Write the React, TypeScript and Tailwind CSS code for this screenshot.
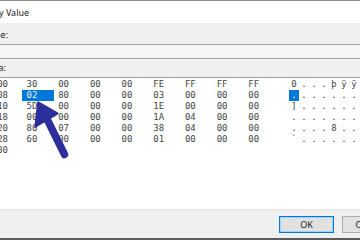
import { Fragment } from "react";

type Row = { addr: string; bytes: string[]; ascii: string };

const rows: Row[] = [
  { addr: "0000", bytes: ["30", "00", "00", "00", "FE", "FF", "FF", "FF"], ascii: "0...þÿÿÿ" },
  { addr: "0008", bytes: ["02", "80", "00", "00", "03", "00", "00", "00"], ascii: "........" },
  { addr: "0010", bytes: ["5D", "00", "00", "00", "1E", "00", "00", "00"], ascii: "]......." },
  { addr: "0018", bytes: ["00", "00", "00", "00", "1A", "04", "00", "00"], ascii: "........" },
  { addr: "0020", bytes: ["80", "07", "00", "00", "38", "04", "00", "00"], ascii: "....8..." },
  { addr: "0028", bytes: ["60", "00", "00", "00", "01", "00", "00", "00"], ascii: "`......." },
  { addr: "0030", bytes: [], ascii: "" },
];

// the caret sits on the first byte of the second line
const SEL_ROW = 1;
const SEL_COL = 0;

function HexRow({ row, index }: { row: Row; index: number }) {
  return (
    <div className="flex h-[11px] items-center leading-[11px]">
      <span className="w-[42px] shrink-0 pr-[14px] text-right">{row.addr}</span>
      {row.bytes.map((b, i) => {
        const sel = index === SEL_ROW && i === SEL_COL;
        return (
          <span
            key={i}
            className={
              sel
                ? "h-[11px] w-[31.7px] shrink-0 bg-[#0078d7] pl-[4.5px] text-[#eaf2ff]"
                : "w-[31.7px] shrink-0 pl-[4.5px]"
            }
          >
            {b}
          </span>
        );
      })}
      {row.bytes.length > 0 && (
        <span className="ml-[13.4px] flex shrink-0">
          {row.ascii.split("").map((c, i) => {
            const sel = index === SEL_ROW && i === SEL_COL;
            return (
              <span
                key={i}
                className={
                  sel
                    ? "h-[11px] w-[10px] shrink-0 bg-[#0078d7] text-center text-white"
                    : "w-[10px] shrink-0 text-center"
                }
              >
                {c}
              </span>
            );
          })}
        </span>
      )}
    </div>
  );
}

function Arrow() {
  return (
    <svg
      className="pointer-events-none absolute left-0 top-0"
      width="360"
      height="240"
      viewBox="0 0 360 240"
    >
      <line x1="47" y1="119" x2="64.5" y2="154.5" stroke="#2b2e9b" strokeWidth="7.5" strokeLinecap="round" />
      <polygon points="38,102 35,127 58,113.5" fill="#2b2e9b" stroke="#2b2e9b" strokeWidth="1.5" strokeLinejoin="round" />
    </svg>
  );
}

export default function App() {
  return (
    <div className="relative flex h-[240px] w-[360px] flex-col overflow-hidden bg-[#f0f0f0] font-['Noto_Sans',Arial,sans-serif] text-[9px] text-[#1a1a1a]">
      {/* title bar */}
      <div className="flex h-[23px] shrink-0 items-center border-t border-[#8e8e8e] bg-white">
        <span className="-ml-[42px] whitespace-nowrap leading-none">Edit Binary Value</span>
      </div>

      <div className="mt-[6px] h-[12px] shrink-0 whitespace-nowrap leading-[12px]">
        <span className="-ml-[44px] inline-block">Value name:</span>
      </div>
      <div className="mt-[3px] h-[15px] shrink-0 border-y border-[#a3a3a3] bg-[#f5f5f5]" />

      <div className="mt-[3px] h-[12px] shrink-0 whitespace-nowrap leading-[12px]">
        <span className="-ml-[41px] inline-block">Value data:</span>
      </div>
      <div className="mt-[3px] h-[133px] shrink-0 border-y border-t-[#9c9c9c] border-b-[#e4e4e4] bg-white pt-[1px] font-['DejaVu_Sans_Mono',monospace] text-[9px] text-[#454545]">
        <div className="-ml-[20px]">
          {rows.map((r, i) => (
            <Fragment key={r.addr}>
              <HexRow row={r} index={i} />
            </Fragment>
          ))}
        </div>
      </div>

      {/* buttons */}
      <div className="mt-[6px] -mr-[37px] flex h-[17px] shrink-0 justify-end gap-[8px]">
        <button className="h-[17px] w-[55px] border border-[#0078d7] bg-[#e1e1e1] text-[9px] leading-none text-[#1a1a1a] shadow-[inset_0_0_0_1px_#9fd1f5]">
          OK
        </button>
        <button className="h-[17px] w-[55px] border border-[#adadad] bg-[#e1e1e1] text-[9px] leading-none text-[#1a1a1a]">
          Cancel
        </button>
      </div>

      <div className="mt-auto h-[2px] shrink-0 bg-[#5c5c5c]" />

      <Arrow />
    </div>
  );
}
